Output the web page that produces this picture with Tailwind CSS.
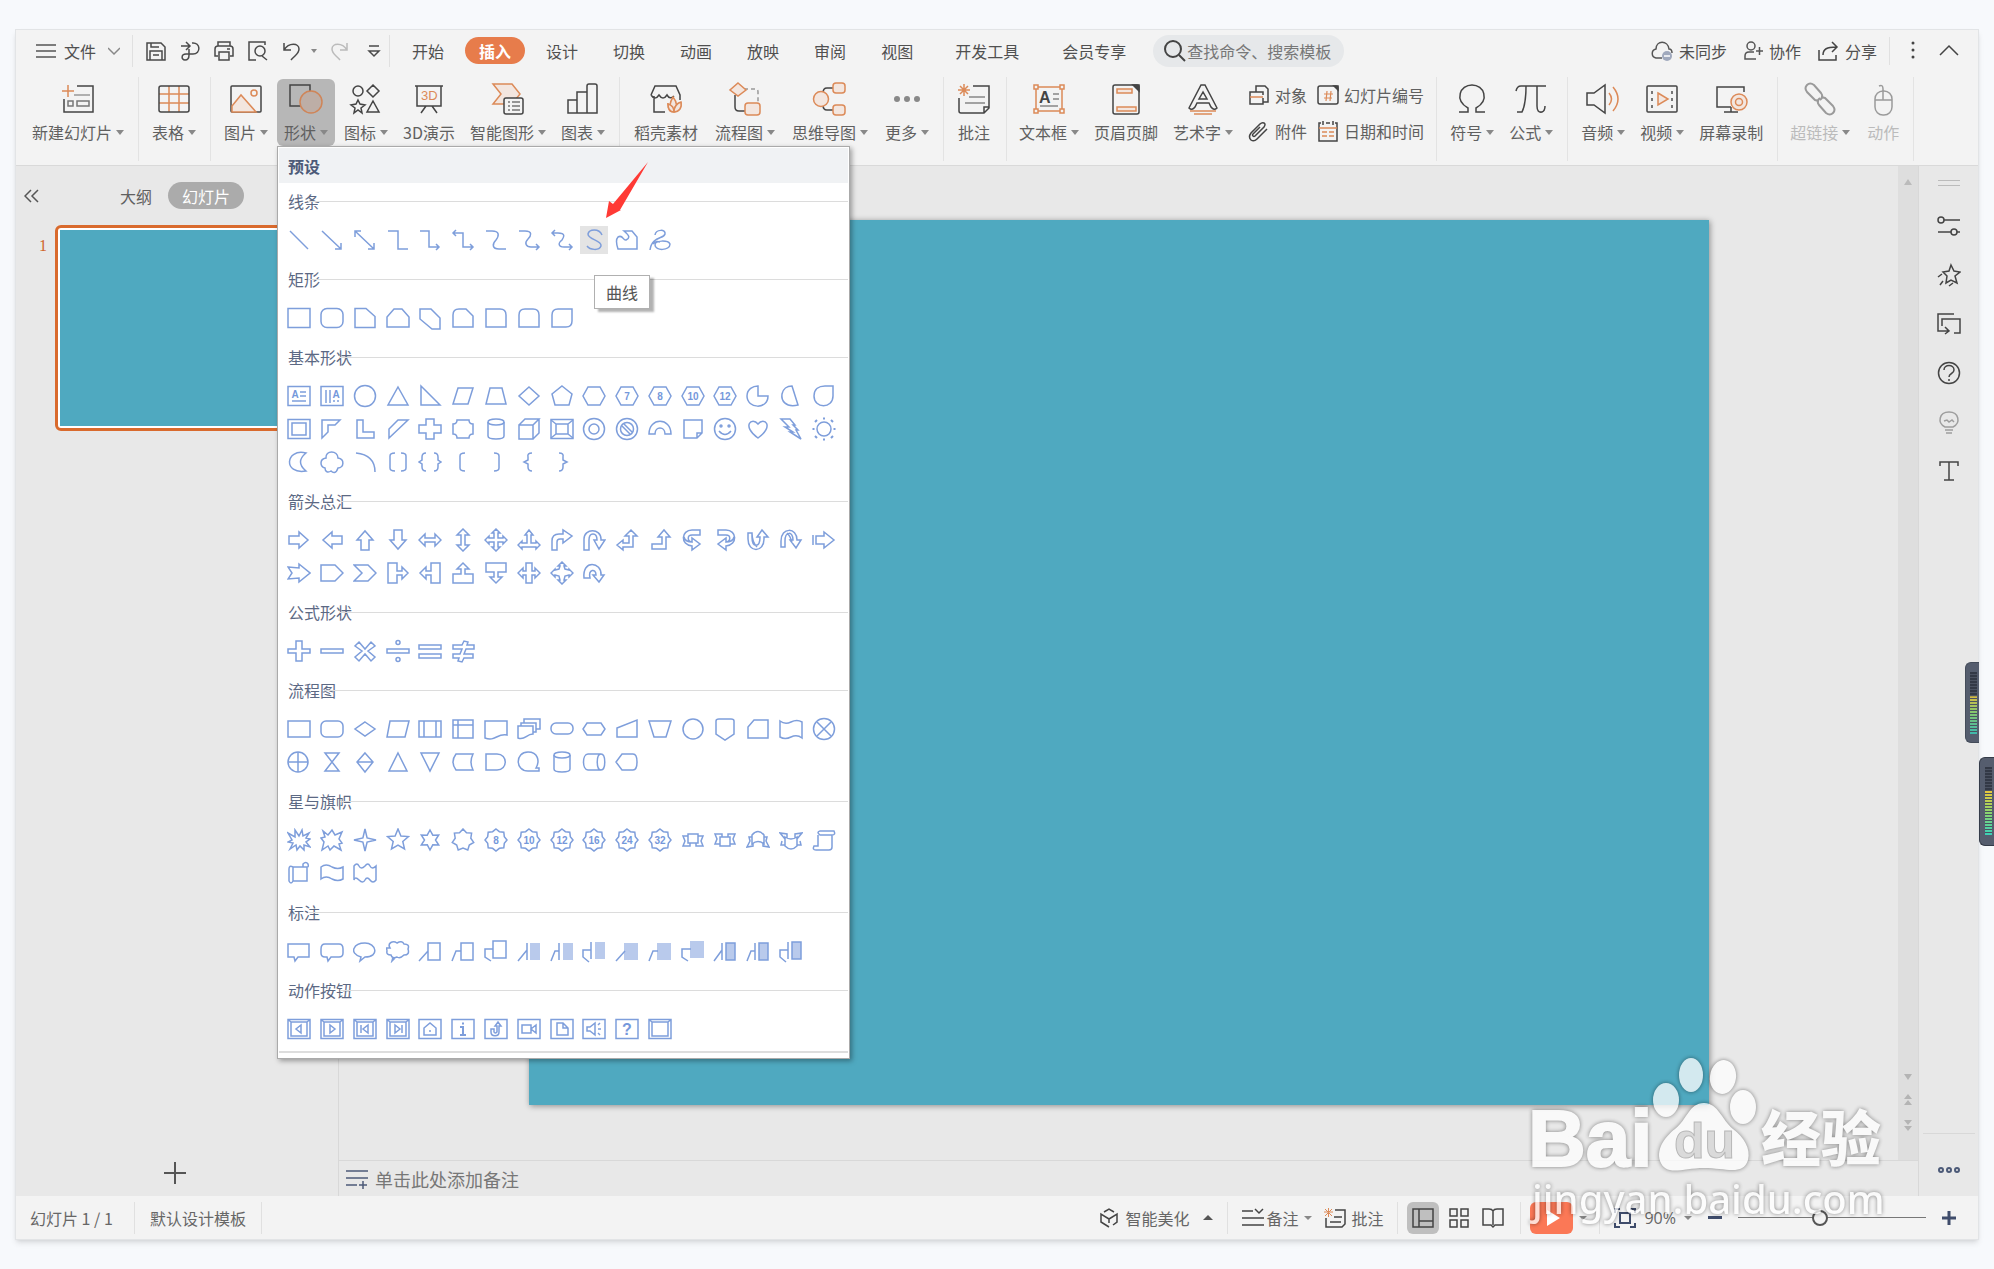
<!DOCTYPE html>
<html lang="zh-CN">
<head>
  <meta charset="UTF-8" />
  <title>演示</title>
  <meta name="viewport" content="width=device-width, initial-scale=1.0" />
  <script src="https://cdn.jsdelivr.net/npm/@tailwindcss/browser@4"></script>
</head>
<body class="h-screen bg-[#f7f9fc] px-[15px] py-[29px] font-['Noto_Sans_CJK_SC',sans-serif] text-base leading-6 text-[#606060] overflow-hidden">
  <div class="flex h-full flex-col border border-[#e2e4e6] bg-[#f3f3f3] shadow-md">

    <!-- Menu bar -->
    <header class="flex h-[43px] shrink-0 items-center pb-[2px] text-[#505050]">
      <button class="ml-5 flex items-center gap-2">
        <svg class="h-5 w-5 fill-none stroke-[#555] stroke-[1.5]" viewBox="0 0 20 20"><path d="M0 4h20M0 10h20M0 16h20"/></svg>
        文件
        <svg class="ml-1 size-3 fill-none stroke-[#888] stroke-[1.5]" viewBox="0 0 12 12"><path d="M0 3l6 6 6-6"/></svg>
      </button>
      <span class="ml-3 h-8 w-px bg-[#e0e0e0]"></span>
      <div class="ml-3 flex items-center gap-3">
        <button aria-label="保存"><svg class="block size-[22px] fill-none stroke-[#4a4a4a] stroke-[1.5]" viewBox="0 0 22 22"><path d="M2 3h14l4 4v13H2zM5 20v-9h12v9M6 3v4h8M8 15h6"/></svg></button>
        <button aria-label="输出"><svg class="block size-[22px] fill-none stroke-[#4a4a4a] stroke-[1.5]" viewBox="0 0 22 22"><path d="M2 6h8M7 2l4 4-4 4M13 3c9-1 9 11 1 11H7c-5 0-5 6-1 6 3 0 4-2 4-5V9"/></svg></button>
        <button aria-label="打印"><svg class="block size-[22px] fill-none stroke-[#4a4a4a] stroke-[1.5]" viewBox="0 0 22 22"><path d="M5 6V2h12v4M5 16H2V9q0-3 3-3h12q3 0 3 3v7h-3M6 12h10v8H6zM14 9h3"/></svg></button>
        <button aria-label="预览"><svg class="block size-[22px] fill-none stroke-[#4a4a4a] stroke-[1.5]" viewBox="0 0 22 22"><path d="M9 20H2V2h16v3M15 16l5 4"/><circle cx="13" cy="11" r="5"/></svg></button>
        <button class="flex items-center gap-2" aria-label="撤销"><svg class="block size-[22px] fill-none stroke-[#4a4a4a] stroke-[1.5]" viewBox="0 0 22 22"><path d="M3 3v7h7M3 10c5-8 15-7 15-1 0 5-4 6-8 11"/></svg><span class="border-x-[3px] border-t-4 border-x-transparent border-t-[#888]"></span></button>
        <button aria-label="恢复"><svg class="block size-[22px] fill-none stroke-[#bbb] stroke-[1.5]" viewBox="0 0 22 22"><path d="M18 3v7h-7M18 10C13 2 3 3 3 9c0 5 4 6 8 11"/></svg></button>
        <button aria-label="自定义"><svg class="block size-[22px] fill-none stroke-[#4a4a4a] stroke-[1.5]" viewBox="0 0 22 22"><path d="M6 6h10M6 11h10l-5 5z"/></svg></button>
      </div>
      <span class="ml-1 h-8 w-px bg-[#e0e0e0]"></span>
      <nav class="ml-2 flex items-center gap-[7px]">
        <button class="px-[14px]">开始</button>
        <button class="h-[27px] rounded-full bg-[#e77c4b] px-[14px] font-bold text-white">插入</button>
        <button class="px-[14px]">设计</button>
        <button class="px-[14px]">切换</button>
        <button class="px-[14px]">动画</button>
        <button class="px-[14px]">放映</button>
        <button class="px-[14px]">审阅</button>
        <button class="px-[14px]">视图</button>
      </nav>
      <nav class="ml-[14px] flex items-center gap-[15px]">
        <button class="px-[14px]">开发工具</button>
        <button class="px-[14px]">会员专享</button>
      </nav>
      <label class="ml-[13px] flex h-8 w-[191px] items-center rounded-full bg-[#e6e8ea] pl-[10px]">
        <svg class="size-6 shrink-0 fill-none stroke-[#444] stroke-2" viewBox="0 0 24 24" aria-hidden="true"><circle cx="10" cy="10" r="8"/><path d="M16 16l6 6"/></svg>
        <input class="w-full bg-transparent placeholder:text-[#777] outline-none" type="text" placeholder="查找命令、搜索模板" aria-label="查找命令" />
      </label>
      <div class="ml-auto flex items-center gap-4">
        <button class="flex items-center gap-[6px]"><svg class="size-[22px] fill-none stroke-[#555] stroke-[1.5]" viewBox="0 0 22 22"><path d="M11 18H5c-5-1-5-8 0-9 0-9 12-9 13 0 2 0 3 2 3 4"/><circle class="fill-[#a0a9bd] stroke-none" cx="16" cy="16" r="5"/><path class="stroke-white" d="M13 16h6"/></svg>未同步</button>
        <button class="flex items-center gap-[6px]"><svg class="size-5 fill-none stroke-[#555] stroke-[1.5]" viewBox="0 0 20 20"><circle cx="8" cy="5" r="4"/><path d="M13 18H2v-3q0-4 4-4h5M13 10h7M16.500 6v8"/></svg>协作</button>
        <button class="flex items-center gap-[6px]"><svg class="size-[22px] fill-none stroke-[#444] stroke-[1.5]" viewBox="0 0 22 22"><path d="M2 10v10h17v-5M6 15C6 9 10 7 19 7M15 2l5 5-5 5"/></svg>分享</button>
      </div>
      <span class="ml-3 h-7 w-px bg-[#e0e0e0]"></span>
      <button class="ml-[21px]" aria-label="更多选项"><svg class="block h-5 w-1 fill-[#444]" viewBox="0 0 4 20"><circle cx="2" cy="2" r="1.500"/><circle cx="2" cy="9" r="1.500"/><circle cx="2" cy="16" r="1.500"/></svg></button>
      <button class="mr-[19px] ml-6" aria-label="收起功能区"><svg class="block h-5 w-5 fill-none stroke-[#444] stroke-[1.5]" viewBox="0 0 20 20"><path d="M1 14l9-9 9 9"/></svg></button>
    </header>

    <!-- Ribbon -->
    <div class="relative z-20 flex h-[93px] shrink-0 border-b border-[#d9d9d9] py-1 whitespace-nowrap [&_button>svg]:fill-none [&_button>svg]:stroke-[#444] [&_button>svg]:stroke-[1.5] [&_i]:ml-1 [&_i]:border-x-4 [&_i]:border-t-[5px] [&_i]:border-x-transparent [&_i]:border-t-[#888] [&_button>span]:flex [&_button>span]:items-center">
      <div class="flex items-start border-r border-[#e3e3e3] pt-1 pr-[14px] pl-4">
        <button class="flex flex-col items-center gap-[3px]"><svg class="size-9" viewBox="0 0 36 36"><path class="stroke-[#dc8a58]" d="M2 10h12M8 4v12"/><path d="M17 5h16v26H4V18"/><path class="stroke-[#999]" d="M14 14h16"/><path class="stroke-[#777]" d="M8 20h5v5H8zM17 20h12v5H17z"/></svg><span>新建幻灯片<i></i></span></button>
      </div>
      <div class="flex items-start border-r border-[#e3e3e3] pt-1 pr-[14px] pl-[13px]">
        <button class="flex flex-col items-center gap-[3px]"><svg class="size-9" viewBox="0 0 36 36"><path class="stroke-[#dc8a58]" d="M3 13h30M3 22h30M13 5v26M23 5v26"/><rect x="3" y="5" width="30" height="26" rx="2"/></svg><span>表格<i></i></span></button>
      </div>
      <div class="flex items-start gap-[15px] border-r border-[#e3e3e3] pt-1 pr-[14px] pl-[13px]">
        <button class="flex flex-col items-center gap-[3px]"><svg class="size-9" viewBox="0 0 36 36"><rect x="3" y="5" width="30" height="26" rx="1"/><path class="fill-[#f3e6df] stroke-[#dc8a58]" d="M4 25l9-11 15 17H4z"/><circle class="stroke-[#dc8a58]" cx="26" cy="12" r="3"/></svg><span>图片<i></i></span></button>
        <div class="relative -mx-[6px] -mt-[2px]">
          <button class="flex h-[67px] w-[58px] flex-col items-center gap-[3px] rounded-md bg-[#b7b7b7] pt-[2px]" aria-expanded="true"><svg class="size-9" viewBox="0 0 36 36"><path d="M14 25H2V4h20v9"/><ellipse class="fill-[#bdaea6] stroke-[#cf8558]" cx="23" cy="21" rx="11" ry="11"/></svg><span>形状<i></i></span></button>

          <!-- Shape gallery -->
          <div class="absolute top-full left-0 w-[573px] border border-[#aaa] bg-white p-px shadow-[2px_2px_5px_rgba(0,0,0,0.35)]">
            <h2 class="mb-[6px] h-[35px] bg-[#f0f2f4] pl-[9px] leading-9 font-bold text-[#4c5a78]">预设</h2>
            <div id="gallery"></div>
            <hr class="mt-[-5px] mb-1 border-t-2 border-[#ddd]" />
            <div class="absolute top-[128px] left-[316px] border border-[#b0b0b0] bg-white px-[11px] py-1 text-[#555] shadow-[4px_3px_2px_rgba(0,0,0,0.3)]" role="tooltip">曲线</div>
            <svg class="absolute top-[14px] left-[325px] h-[58px] w-[46px] fill-[#ff3a35]" viewBox="0 0 46 58" aria-hidden="true"><path d="M45 1L17 49l1 0-15 8L6 40l4 3z"/></svg>
          </div>
        </div>
        <button class="flex flex-col items-center gap-[3px]"><svg class="size-9" viewBox="0 0 36 36"><circle cx="10" cy="10" r="5"/><path d="M25 4l6 6-6 6-6-6zM25 20l6 11H19zM10 19l2 4 5 1-4 3 1 5-4-3-4 3 1-5-4-3 5-1z"/></svg><span>图标<i></i></span></button>
        <button class="flex flex-col items-center gap-[3px]"><svg class="size-9" viewBox="0 0 36 36"><path d="M4 5h28M6 5v20h24V5M15 25l-5 7M21 25l5 7"/><text class="fill-[#dc8a58] stroke-none font-['Liberation_Sans'] text-[13px]" x="10" y="19">3D</text></svg><span>3D演示</span></button>
        <button class="flex flex-col items-center gap-[3px]"><svg class="size-9" viewBox="0 0 36 36"><path class="fill-[#f3e6df] stroke-[#dc8a58]" d="M3 3h19l8 10-8 10H3l8-10z"/><rect class="fill-[#f3f3f3]" x="14" y="17" width="19" height="16" rx="2"/><path class="stroke-[#777]" d="M18 21h2M22 21h8M18 25h2M22 25h8M18 29h2M22 29h8"/></svg><span>智能图形<i></i></span></button>
        <button class="flex flex-col items-center gap-[3px]"><svg class="size-9" viewBox="0 0 36 36"><path d="M3 32V19h9v13zM12 32V11h10v21zM22 32V5q0-2 2-2h6q2 0 2 2v27zM3 32h29"/></svg><span>图表<i></i></span></button>
      </div>
      <div class="flex items-start gap-[17px] border-r border-[#e3e3e3] pt-1 pr-[14px] pl-[14px]">
        <button class="flex flex-col items-center gap-[3px]"><svg class="size-9" viewBox="0 0 36 36"><path d="M17 31H6V15M3 14L7 5h21l4 9v5M3 14q4 6 8 0 4 6 8 0 3 5 7 1"/><path class="fill-[#f3e6df] stroke-[#dc8a58]" d="M26 31C20 26 22 21 25 16c4 5 5 10 1 15zC30 30 34 28 33 22c-4 1-7 4-7 9-1-5-3-7-6-8 0 4 1 8 6 8"/><path class="fill-[#f3e6df] stroke-[#dc8a58]" d="M26 31c5 0 8-4 7-10-4 1-7 5-7 10zM26 31c-4 0-6-3-6-8 4 1 6 4 6 8z"/></svg><span>稻壳素材</span></button>
        <button class="flex flex-col items-center gap-[3px]"><svg class="size-9" viewBox="0 0 36 36"><path d="M8 14v12q0 4 4 4h6"/><path class="stroke-[#999]" stroke-dasharray="4 3" d="M17 8h11q3 0 3 3v12"/><path class="fill-[#f3e6df] stroke-[#dc8a58]" d="M11 2l8 7-8 6-8-6z"/><rect class="fill-[#f3e6df] stroke-[#dc8a58]" x="18" y="22" width="15" height="12" rx="3"/></svg><span>流程图<i></i></span></button>
        <button class="flex flex-col items-center gap-[3px]"><svg class="size-9" viewBox="0 0 36 36"><path d="M22 7h-7q-4 0-4 5M22 29h-7q-4 0-4-5"/><circle class="fill-[#f3e6df] stroke-[#dc8a58]" cx="9" cy="18" r="7.500"/><rect class="fill-[#f3e6df] stroke-[#dc8a58]" x="21" y="2" width="12" height="10" rx="3"/><rect class="fill-[#f3e6df] stroke-[#dc8a58]" x="21" y="24" width="12" height="10" rx="3"/></svg><span>思维导图<i></i></span></button>
        <button class="flex flex-col items-center gap-[3px]"><svg class="size-9" viewBox="0 0 36 36"><g class="fill-[#888] stroke-none"><circle cx="8" cy="18" r="3"/><circle cx="18" cy="18" r="3"/><circle cx="28" cy="18" r="3"/></g></svg><span>更多<i></i></span></button>
      </div>
      <div class="flex items-start border-r border-[#e3e3e3] pt-1 pr-[14px] pl-3">
        <button class="flex flex-col items-center gap-[3px]"><svg class="size-9" viewBox="0 0 36 36"><path class="stroke-[#dc8a58] stroke-[1.5]" d="M2 9h12M8 3v12M4 5l8 8M12 5l-8 8"/><path d="M17 5h16v22l-5 5H5q-2 0-2-2V17M33 26h-5v6"/><path class="stroke-[#888]" d="M13 16h16M9 22h20"/></svg><span>批注</span></button>
      </div>
      <div class="flex items-start gap-[15px] border-r border-[#e3e3e3] pt-1 pr-3 pl-3">
        <button class="flex flex-col items-center gap-[3px]"><svg class="size-9" viewBox="0 0 36 36"><path class="stroke-[#dc8a58]" d="M7 6h22M7 30h22M5 8v20M31 8v20M3 4h4v4H3zM29 4h4v4h-4zM3 28h4v4H3zM29 28h4v4h-4z"/><text class="fill-[#444] stroke-none font-['Liberation_Sans'] text-base font-bold" x="8" y="22">A</text><path class="stroke-[#888]" d="M22 13h6M22 18h6M9 25h18"/></svg><span>文本框<i></i></span></button>
        <button class="flex flex-col items-center gap-[3px]"><svg class="size-9" viewBox="0 0 36 36"><rect x="5" y="4" width="26" height="29" rx="2"/><path class="fill-[#444]" d="M25 4l6 6V4z"/><path class="fill-[#f3e6df] stroke-[#dc8a58]" d="M9 8h15v4H9zM9 26h19v4H9z"/></svg><span>页眉页脚</span></button>
        <button class="flex flex-col items-center gap-[3px]"><svg class="size-9" viewBox="0 0 36 36"><path d="M16 4h4l12 23q-3 3-6-1l-2-4H12l-2 4q-3 4-6 1zM18 11l-4 7h8z"/><path class="stroke-[#dc8a58]" d="M5 30h26M9 33h18"/></svg><span>艺术字<i></i></span></button>
        <div class="mt-[2px] grid grid-cols-[auto_auto] gap-x-[10px] gap-y-3">
          <button class="flex items-center gap-[5px]"><svg class="size-[22px]" viewBox="0 0 22 22"><path d="M8 8V2h9l3 3v13h-5M15 11V8H2v12h13v-6"/><path class="stroke-[#dc8a58]" d="M2 13h13"/></svg>对象</button>
          <button class="flex items-center gap-[5px]"><svg class="size-[22px]" viewBox="0 0 22 22"><rect x="1" y="2" width="20" height="18" rx="2"/><path class="fill-[#444]" d="M17 2l4 4V2z"/><path class="stroke-[#dc8a58] stroke-[1.2]" d="M7 10h9M7 14h8M10 7l-1 10M14 7l-1 10"/></svg>幻灯片编号</button>
          <button class="flex items-center gap-[5px]"><svg class="size-[22px]" viewBox="0 0 22 22"><path d="M7 16l9-9q2-3 0-4-2-1-4 1L3 13q-3 4 0 7 3 2 6-1L19 9M7 16q-1 1-2 0t0-2l7-7"/></svg>附件</button>
          <button class="flex items-center gap-[5px]"><svg class="size-[22px]" viewBox="0 0 22 22"><path d="M4 3H2v18h18V3h-2M9 3h4M6 1v4M16 1v4"/><path class="stroke-[#dc8a58]" d="M2 8h18M5 12h5M12 12h5M5 16h5M12 16h5"/></svg>日期和时间</button>
        </div>
      </div>
      <div class="flex items-start gap-[15px] border-r border-[#e3e3e3] pt-1 pr-[14px] pl-[13px]">
        <button class="flex flex-col items-center gap-[3px]"><svg class="size-9" viewBox="0 0 36 36"><path d="M5 31h9v-4C0 19 6 4 18 4s18 15 4 23v4h9"/></svg><span>符号<i></i></span></button>
        <button class="flex flex-col items-center gap-[3px]"><svg class="size-9" viewBox="0 0 36 36"><path d="M3 10q1-5 5-5h25M13 5c0 12-1 20-4 26H4M24 5v20q0 7 5 6 3-1 3-6"/></svg><span>公式<i></i></span></button>
      </div>
      <div class="flex items-start gap-[15px] border-r border-[#e3e3e3] pt-1 pr-[14px] pl-[13px]">
        <button class="flex flex-col items-center gap-[3px]"><svg class="size-9" viewBox="0 0 36 36"><path d="M2 12h7l11-8v28L9 24H2z"/><path class="stroke-[#dc8a58]" d="M24 12q5 6 0 12M28 6q10 12 0 24"/></svg><span>音频<i></i></span></button>
        <button class="flex flex-col items-center gap-[3px]"><svg class="size-9" viewBox="0 0 36 36"><rect x="3" y="5" width="30" height="26" rx="1"/><path class="fill-[#f3e6df] stroke-[#dc8a58]" d="M14 12l10 6-10 6z"/><path class="stroke-[#777] stroke-2" stroke-dasharray="3 4" d="M8 10v17M28 10v17"/></svg><span>视频<i></i></span></button>
        <button class="flex flex-col items-center gap-[3px]"><svg class="size-9" viewBox="0 0 36 36"><path d="M31 11V6H4v20h14M11 31h14M18 26v5"/><circle class="fill-[#f3e6df] stroke-[#dc8a58]" cx="26" cy="21" r="8"/><circle class="stroke-[#dc8a58]" cx="26" cy="21" r="3.500"/></svg><span>屏幕录制</span></button>
      </div>
      <div class="flex items-start gap-[15px] border-r border-[#e3e3e3] pt-1 pr-3 pl-3 text-[#bbb]">
        <button class="flex flex-col items-center gap-[3px]"><svg class="size-9 opacity-50" viewBox="0 0 36 36"><g stroke-width="2"><path d="M17 20l-4-1L5 11q-3-4 0-7t7 0l7 8q3 4-1 7"/><path d="M19 16l4 1 8 8q3 4 0 7t-7 0l-7-8q-3-4 1-7"/></g></svg><span>超链接<i></i></span></button>
        <button class="flex flex-col items-center gap-[3px]"><svg class="size-9 opacity-50" viewBox="0 0 36 36"><rect x="10" y="10" width="17" height="24" rx="8"/><path d="M10 19h17M18 19V8q0-5-4-3"/></svg><span>动作</span></button>
      </div>
    </div>

    <!-- Work area -->
    <div class="flex min-h-0 flex-1 bg-[#e8e8e8]">
      <aside class="flex w-[323px] shrink-0 flex-col border-r border-[#d8d8d8]">
        <div class="mt-4 flex items-center">
          <button class="ml-2" aria-label="收起"><svg class="block size-4 fill-none stroke-[#555] stroke-[1.5]" viewBox="0 0 16 16"><path d="M7 2L1 8l6 6M14 2L8 8l6 6"/></svg></button>
          <button class="ml-20">大纲</button>
          <button class="ml-4 h-[27px] rounded-full bg-[#ababab] px-[14px] text-white">幻灯片</button>
        </div>
        <div class="mt-4 flex">
          <span class="mt-[9px] w-[39px] pr-2 text-right font-['Liberation_Serif'] text-[#d0642c]">1</span>
          <div class="h-[206px] w-[270px] rounded-md border-[3px] border-[#d96a2d] bg-white p-[2px]"><div class="h-full bg-[#4fa9c0]"></div></div>
        </div>
        <button class="mt-auto mb-3 ml-[148px] size-[22px]" aria-label="新建幻灯片"><svg class="block size-[22px] fill-none stroke-[#555] stroke-2" viewBox="0 0 22 22"><path d="M0 11h22M11 0v22"/></svg></button>
      </aside>

      <main class="flex min-w-0 flex-1 flex-col">
        <div class="flex min-h-0 flex-1">
          <div class="flex min-w-0 flex-1 justify-center pt-[54px] pb-[55px]">
            <div class="aspect-4/3 h-full bg-[#4fa9c0] shadow-[1px_1px_6px_rgba(0,0,0,0.4)]"></div>
          </div>
          <div class="flex w-5 flex-col items-center gap-[14px] bg-[#dedede] pb-7">
            <svg class="mt-[13px] mb-auto h-[6px] w-2 fill-[#bbb]" viewBox="0 0 8 6"><path d="M4 0l4 6H0z"/></svg>
            <svg class="h-[6px] w-2 fill-[#b4b4b4]" viewBox="0 0 8 6"><path d="M0 0h8L4 6z"/></svg>
            <svg class="h-3 w-2 fill-[#b4b4b4]" viewBox="0 0 8 12"><path d="M4 0l4 5H0zM4 6l4 5H0z"/></svg>
            <svg class="h-3 w-2 fill-[#b4b4b4]" viewBox="0 0 8 12"><path d="M0 0h8L4 5zM0 6h8l-4 5z"/></svg>
          </div>
        </div>
        <div class="flex h-9 shrink-0 items-center gap-[7px] border-t border-[#d8d8d8] pl-[7px] text-lg text-[#777]">
          <svg class="size-[22px] fill-none stroke-[#4c5a78] stroke-[1.5]" viewBox="0 0 22 22"><path d="M0 3h22M0 10h22M0 17h11M13 17h8M17 13v8"/></svg>
          单击此处添加备注
        </div>
      </main>

      <aside class="flex w-[60px] shrink-0 flex-col items-center border-l border-[#d8d8d8] pt-[14px] pb-5 [&_svg]:block [&_svg]:fill-none [&_svg]:stroke-[#444] [&_svg]:stroke-[1.5]">
        <div class="h-[6px] w-[22px] border-y border-[#bbb]"></div>
        <div class="mt-7 flex flex-col gap-[25px]">
          <button aria-label="属性"><svg class="size-6" viewBox="0 0 24 24"><circle cx="4" cy="6" r="3"/><circle cx="17" cy="18" r="3"/><path d="M7 6h16M1 18h13M20 18h3"/></svg></button>
          <button aria-label="动画"><svg class="size-6" viewBox="0 0 24 24"><path d="M14 2l3 6 6 1-5 4 2 7-6-3-5 3 1-7-4-4 6-1zM5 11l-4 3M6 18l-3 4M16 20l-4 3"/></svg></button>
          <button aria-label="切换"><svg class="size-6" viewBox="0 0 24 24"><path d="M17 2H1v17h10M8 15l4 4-4 3M5 14V7h18v14h-6"/></svg></button>
          <button aria-label="帮助"><svg class="size-6" viewBox="0 0 24 24"><circle cx="12" cy="12" r="10.500"/><path d="M7 9c0-6 10-6 10 0 0 4-5 3-5 7M12 18v2"/></svg></button>
          <button class="opacity-45" aria-label="提示"><svg class="size-6" viewBox="0 0 24 24"><path d="M8 17C0 13 2 2 12 2s12 11 4 15zM8 20h8M9 23h6M7 11l3-1 2 2 3-2 2 2"/></svg></button>
          <button aria-label="文字"><svg class="size-6" viewBox="0 0 24 24"><path d="M3 7V3h18v4M12 3v18M7 21h10"/></svg></button>
        </div>
        <hr class="mt-auto mb-[30px] w-[52px] border-[#d8d8d8]" />
        <button aria-label="更多"><svg class="h-3 w-6" viewBox="0 0 24 12"><g class="stroke-[#4c5a78] stroke-2"><circle cx="4" cy="6" r="2"/><circle cx="12" cy="6" r="2"/><circle cx="20" cy="6" r="2"/></g></svg></button>
      </aside>
    </div>

    <!-- Status bar -->
    <footer class="flex h-[43px] shrink-0 items-center text-[#666] [&_svg]:block [&_svg]:shrink-0 [&_svg]:fill-none [&_svg]:stroke-[#444] [&_svg]:stroke-[1.5]">
      <span class="w-[118px] pl-[14px]">幻灯片 1 / 1</span>
      <span class="flex h-8 items-center border-x border-[#e0e0e0] px-[15px]">默认设计模板</span>
      <button class="ml-auto flex items-center gap-[6px]"><svg class="size-5" viewBox="0 0 20 20"><path d="M5 4l5-3 5 3M10 19l-8-5V6l8 5 8-5v8l-4 3M10 11v4"/></svg>智能美化<span class="ml-2 border-x-[5px] border-b-[5px] border-x-transparent border-b-[#555]"></span></button>
      <span class="mx-[14px] h-8 w-px bg-[#e0e0e0]"></span>
      <button class="flex items-center gap-[2px]"><svg class="h-5 w-[22px]" viewBox="0 0 22 20"><path d="M0 3h11M0 10h22M0 17h22M13 1l4 4 4-4"/></svg>备注<span class="ml-1 border-x-4 border-t-4 border-x-transparent border-t-[#888]"></span></button>
      <button class="ml-3 flex items-center gap-[5px]"><svg class="size-[22px]" viewBox="0 0 22 22"><path class="stroke-[#dc8a58] stroke-1" d="M0 5h9M4.500 1v9M1 2l7 7M8 2L1 9"/><path d="M11 3h10v14l-3 3H2v-9M6 15h11M10 10h8"/></svg>批注</button>
      <span class="mr-[9px] ml-[14px] h-8 w-px bg-[#e0e0e0]"></span>
      <button class="flex size-8 items-center justify-center rounded-md bg-[#bfbfbf]" aria-label="普通视图"><svg class="size-[22px]" viewBox="0 0 22 22"><path d="M1 2h20v18H1zM7 2v18M7 14h14"/></svg></button>
      <button class="ml-[9px]" aria-label="幻灯片浏览"><svg class="size-[22px]" viewBox="0 0 22 22"><path d="M2 2h7v7H2zM13 2h7v7h-7zM2 13h7v7H2zM13 13h7v7h-7z"/></svg></button>
      <button class="ml-3" aria-label="阅读视图"><svg class="size-[22px]" viewBox="0 0 22 22"><path d="M11 4q-1-2-4-2H1v16h8l2 2 2-2h8V2h-6q-3 0-4 2v14"/></svg></button>
      <span class="mr-[9px] ml-4 h-8 w-px bg-[#e0e0e0]"></span>
      <button class="flex h-8 w-[43px] items-center justify-center rounded-md bg-[#fb7856]" aria-label="放映"><span class="ml-1 border-y-8 border-l-[13px] border-y-transparent border-l-white"></span></button>
      <span class="ml-[6px] border-x-4 border-t-4 border-x-transparent border-t-[#888]"></span>
      <span class="mr-[14px] ml-3 h-8 w-px bg-[#e0e0e0]"></span>
      <button aria-label="适应窗口"><svg class="size-[22px]" viewBox="0 0 22 22"><g class="stroke-[#3f4c6b] stroke-2"><path d="M1 6V2h5M16 2h5v4M21 16v4h-5M6 20H1v-4M6 6h10v10H6z"/></g></svg></button>
      <button class="ml-2 flex items-center font-['Open_Sans']">90%<span class="ml-2 border-x-4 border-t-4 border-x-transparent border-t-[#888]"></span></button>
      <button class="ml-4 h-[3px] w-[14px] bg-[#3f4c6b]" aria-label="缩小"></button>
      <input class="mx-4 h-4 w-[188px] appearance-none bg-[linear-gradient(#777,#777)] bg-[length:100%_1px] bg-center bg-no-repeat [&::-webkit-slider-thumb]:size-4 [&::-webkit-slider-thumb]:appearance-none [&::-webkit-slider-thumb]:rounded-full [&::-webkit-slider-thumb]:border-2 [&::-webkit-slider-thumb]:border-[#555] [&::-webkit-slider-thumb]:bg-[#f3f3f3]" type="range" min="0" max="100" value="43" aria-label="缩放" />
      <button class="mr-[22px]" aria-label="放大"><svg class="size-[14px]" viewBox="0 0 14 14"><path class="stroke-[#3f4c6b] stroke-3" d="M0 7h14M7 0v14"/></svg></button>
    </footer>
  </div>

  <!-- Level meters docked at the screen edge -->
  <div class="absolute top-[662px] right-[15px] h-[81px] w-[14px] rounded-l-md border border-r-0 border-[#444c5a] bg-[#555d6e] pt-[9px] pl-1"><div class="h-[62px] w-[7px] bg-[repeating-linear-gradient(transparent_0_2px,#4b5261_2px_3px),linear-gradient(#333946_38%,#d6bd46_40%,#84c56e_65%,#3fb8ad)]"></div></div>
  <div class="absolute top-[757px] right-0 h-[89px] w-[15px] rounded-l-md border border-r-0 border-[#343b48] bg-[#555d6e] pt-[9px] pl-[5px]"><div class="h-[68px] w-[7px] bg-[repeating-linear-gradient(transparent_0_2px,#4b5261_2px_3px),linear-gradient(#333946_34%,#e8c83c_36%,#8fd46a_65%,#3bd0b8)]"></div></div>

  <!-- Watermark -->
  <svg class="absolute right-[104px] bottom-[37px] z-30 h-[180px] w-[365px] fill-white opacity-75 drop-shadow-[0_0_2px_rgba(0,0,0,0.6)]" viewBox="0 0 365 180">
    <text class="font-['Liberation_Sans'] text-[80px] font-bold stroke-white stroke-2" x="3" y="114">Bai</text>
    <ellipse cx="141" cy="48" rx="13" ry="17"/><ellipse cx="166" cy="23" rx="12" ry="17"/><ellipse cx="198" cy="25" rx="13" ry="17" transform="rotate(8 198 25)"/><ellipse cx="218" cy="55" rx="13" ry="17"/>
    <path d="M179 51c14 0 18 17 29 26 11 8 18 20 15 31-5 16-22 8-44 8s-38 9-44-7c-4-13 6-25 15-32 12-9 14-26 29-26z"/>
    <text class="fill-[#d6d6d6] stroke-[#a8a8a8] stroke-1 font-['Liberation_Sans'] text-[50px] font-bold" x="149" y="106">du</text>
    <text class="text-[60px] font-black" x="236" y="109">经验</text>
    <text class="font-['Noto_Sans'] text-[40px] font-medium" x="7" y="162">jingyan.baidu.com</text>
  </svg>

  <script>
    const p = (d) => `<path d="${d}"/>`;
    const f = (d) => `<path class="fill-[#b9caec] stroke-none" d="${d}"/>`;
    const e = (x, y, rx, ry = rx) => `<ellipse cx="${x}" cy="${y}" rx="${rx}" ry="${ry}"/>`;
    const rot = (a, s) => `<g transform="rotate(${a} 12 12)">${s}</g>`;
    const flip = (s) => `<g transform="matrix(-1 0 0 1 24 0)">${s}</g>`;
    const txt = (s, x = 12, y = 16) => `<text class="fill-[#7598db] stroke-none font-['Liberation_Sans'] text-[10px] font-bold" text-anchor="middle" x="${x}" y="${y}">${s}</text>`;
    const star = (n, r1, r2) => {
      const pts = [];
      for (let i = 0; i < n * 2; i++) {
        const r = i % 2 ? r2 : r1;
        const a = Math.PI * i / n - Math.PI / 2;
        pts.push((12 + r * Math.cos(a)).toFixed(1) + " " + (12 + r * Math.sin(a)).toFixed(1));
      }
      return p("M" + pts.join("L") + "z");
    };

    const hex = p("M6 3h12l5 9-5 9H6l-5-9z");
    const right = p("M2 8h10V4l9 8-9 8v-4H2z");
    const dbl = p("M1 12l6-6v4h10V6l6 6-6 6v-4H7v4z");
    const bent = p("M2 22v-9q0-7 7-7h4V2l9 6-9 7v-4h-3q-3 0-3 3v8z");
    const uturn = p("M2 22V11C2 0 19 0 19 11v1h4l-6 9-5-9h3c0-8-8-8-8 0v10z");
    const elbow = p("M4 16h10V9h-4l6-7 6 7h-4v12H4z");
    const curl = p("M19 2h-8C0 2-1 17 11 18v4l8-6-8-6v4c-5-1-5-7 0-7h8zM3 9c1 4 4 5 8 5");
    const swoop = p("M2 5v6c0 14 16 14 16 0V9h4l-6-7-5 7h3c0 11-8 11-8 0V5zM6 5q0 9 5 14");
    const frame = p("M1 2.500h22v19H1z");
    const bevel = p("M1 2.500h22v19H1zM4 5h16v14H4zM1 2.500L4 5M23 2.500L20 5");
    const ribbon = p("M7 6h10v9H7zM7 8H2l2 5-2 5h7v-3M17 8h5l-2 5 2 5h-7v-3");
    const block = p("M2 2h9v8h5V6l6 6-6 6v-4h-5v8H2z");
    const seal = star(8, 11, 9);

    const sections = [
      ["线条", [
        p("M3 3l18 18"), p("M2 3l19 18M21 15v6h-6"), p("M2 3l19 18M21 15v6h-6M2 9V3h6"),
        p("M2 3h10v18h10"), p("M2 3h9v16h10M18 16l3 3-3 3"), p("M2 5h10v14h10M5 2L2 5l3 3M19 16l3 3-3 3"),
        p("M2 3h6c8 0 7 5 4 9-4 4-4 9 3 9h7"), p("M2 3h6c8 0 6 5 3 8-4 4-2 8 3 8h8M19 16l3 3-3 3"),
        p("M2 5h6c8 0 6 4 4 7-4 3-4 7 2 7h8M5 2L2 5l3 3M19 16l3 3-3 3"),
        p("M20 7C17 0 7 1 6 6c0 6 14 6 13 12-2 5-11 4-14 0"),
        p("M9 3h8l5 6v12H3C2 18 0 12 3 9c5-3 5 4 8 3 4-2 4-4-2-9z"),
        p("M7 7C8 1 18 1 17 6 16 11 4 8 2 22M7 17C7 12 20 12 22 16c0 7-15 7-15 1zM5 16c2-3 4-3 7-2")]],
      ["矩形", [
        frame, '<rect x="1" y="2.500" width="22" height="19" rx="6"/>',
        p("M2 2.500h11l9 8v11H2z"), p("M1 21V11l7-8h8l7 8v10z"), p("M2 3h11l9 9v11h-8L2 13z"),
        p("M2 21V9q0-6 6-6h7l7 7v11z"), p("M2 3h14q6 0 6 6v12H2z"), p("M2 21V9q0-6 6-6h8q6 0 6 6v12z"),
        p("M2 21V9q0-6 6-6h14v12q0 6-6 6z")]],
      ["基本形状", [
        frame + txt("A", 8, 14) + p("M13 8h6M13 12h6M5 17h14"),
        frame + txt("A", 16, 14) + p("M6 6v13M10 6v13M14 16v2M18 16v2"),
        e(12, 12, 10.5), p("M12 3l10 18H2z"), p("M3 2l19 19H3z"), p("M7 4h15l-5 16H2z"), p("M6 4h12l4 16H2z"),
        p("M12 3l10 9-10 9L2 12z"), p("M12 2l10 8-3 11H5L2 10z"), hex, hex + txt(7), hex + txt(8), hex + txt(10), hex + txt(12),
        p("M12 2v10h10C22 26 1 25 1 12 1 5 7 2 12 2z"), p("M13 2l6 19C6 24 2 16 3 10c1-5 5-8 10-8z"), p("M21 2v10c0 13-19 13-19 0C2 5 7 2 13 2z"),
        frame + p("M5 6h14v12H5z"), p("M2 3h18l-5 5H8v7l-6 6z"), p("M4 3h6v12h11v6H4z"), p("M12 3h10L3 21v-9z"),
        p("M8 2h8v6h7v8h-7v6H8v-6H1V8h7z"), p("M6 3h12q0 4 4 4v10q-4 0-4 4H6q0-4-4-4V7q4 0 4-4z"),
        e(12, 5, 8, 3) + p("M4 5v14c0 4 16 4 16 0V5"), p("M2 8h14v14H2zM2 8l6-6h14l-6 6M22 2v14l-6 6"),
        frame + p("M6 7h12v10H6zM1 3l5 4M23 3l-5 4M1 21l5-4M23 21l-5-4"), e(12, 12, 10.5) + e(12, 12, 5),
        e(12, 12, 10.5) + e(12, 12, 6.5) + p("M7 9l8 8M9 7l8 8"), p("M1 17C1 0 23 0 23 17h-6c0-8-10-8-10 0z"),
        p("M3 3h18v13l-5 5H3zM21 16h-5v5"), e(12, 12, 10.5) + e(8, 9, 1) + e(16, 9, 1) + p("M6 14q6 7 12 0"),
        p("M12 21C-5 9 6-1 12 7c6-8 17 2 0 14z"), p("M2 2h9l5 6h-2l5 5h-2l5 9-11-7h3l-8-5h4z"),
        e(12, 12, 7) + `<g stroke-width="2">${p("M11 1.500h2M11 22.500h2M1.500 11v2M22.500 11v2M3 5l2-2M19 3l2 2M3 19l2 2M19 21l2-2")}</g>`,
        p("M19 3C-2-2-4 25 19 21q-11-9 0-18z"), p("M6 8C5 0 18 0 18 8c7 1 6 10 0 10-2 6-5 5-7 3-3 2-6 1-6-3-5-1-6-9 1-10z"),
        p("M3 3q19 2 19 19"), p("M9 3q-5 0-5 3v12q0 3 5 3M15 3q5 0 5 3v12q0 3-5 3"), p("M8 3Q4 3 4 7v3l-3 2 3 2v3q0 4 4 4M16 3q4 0 4 4v3l3 2-3 2v3q0 4-4 4"),
        p("M14 3q-5 0-5 3v12q0 3 5 3"), p("M10 3q5 0 5 3v12q0 3-5 3"), p("M15 3q-5 0-4 4v3l-4 2 4 2v3q0 4 4 4"), p("M9 3q5 0 4 4v3l4 2-4 2v3q0 4-4 4")]],
      ["箭头总汇", [
        right, flip(right), rot(-90, right), rot(90, right), dbl, rot(90, dbl),
        p("M12 1l4 4h-2v5h5V8l4 4-4 4v-2h-5v5h2l-4 4-4-4h2v-5H5v2l-4-4 4-4v2h5V5H8z"),
        p("M12 2l4 5h-2v8h5v-2l4 4-4 4v-2H5v2l-4-4 4-4v2h5V7H8z"), bent, uturn,
        p("M2 17l6-5v3h6V8h-4l6-6 6 6h-4v11H8v3z"), elbow, curl, flip(curl), swoop,
        p("M2 19v-6c0-14 16-14 16-1h4l-5 8-6-8h3C14 3 6 3 6 13v6zM8 5q4 4 5 10"),
        p("M1 7v10M4 8h8V4l10 8-10 8v-4H4z"),
        p("M1 6l11 1V3l11 9-11 9v-4L1 18l4-6z"), p("M1 4h14l8 8-8 8H1z"), p("M1 4h14l8 8-8 8H1l8-8z"),
        block, flip(block), rot(-90, block), rot(90, block),
        p("M9 2h6v8h3V7l5 5-5 5v-3h-3v8H9v-8H6v3l-5-5 5-5v3h3z"), p("M12 1l4 4h-2l1 3 4 1V8l4 4-4 4v-2l-4 1-1 4h2l-4 4-4-4h2l-1-4-4-1v2l-4-4 4-4v1l4-1 1-3H8z"),
        p("M2 17C0-2 20 1 19 14h3l-5 7-6-7h3C14 7 6 8 8 17z")]],
      ["公式形状", [
        p("M9 2h6v8h8v4h-8v8H9v-8H1v-4h8z"), p("M1 10h22v4H1z"), p("M6 3l6 7 6-7 4 4-7 5 7 6-4 4-6-7-6 7-4-4 7-6-7-5z"),
        e(12, 3.500, 2) + p("M1 10h22v4H1z") + e(12, 20.500, 2), p("M1 6h22v4H1zM1 15h22v4H1z"),
        p("M2 6h9l2-4 4 1-1 3h7v4h-8l-2 5h9v4h-9l-2 4-4-1 1-3H2v-4h7l2-5H2z")]],
      ["流程图", [
        p("M1 4h22v16H1z"), '<rect x="1" y="4" width="22" height="16" rx="5"/>', p("M12 5l10 7-10 7-10-7z"), p("M4 4h19l-4 16H1z"),
        p("M1 4h22v16H1zM6 4v16M18 4v16"), p("M2 3h20v18H2zM7 3v18M2 8h20"), p("M1 4h22v14c-10-2-12 7-22 3z"),
        p("M1 9h15v8c-7 0-8 7-15 4zM4 9V6h15v9h-3M7 6V2h16v10h-4"), '<rect x="1" y="6" width="22" height="11" rx="5"/>', p("M5 6h14l4 6-4 6H5l-4-6z"),
        p("M2 11l20-8v17H2z"), p("M1 4h22l-5 16H6z"), e(12, 12, 10), p("M3 4q0-2 3-2h12q3 0 3 2v13l-9 6-9-6z"), p("M8 3h14v18H2V10z"),
        p("M1 4q5 4 11 1 6-3 11 0v16q-5-4-11-1-6 3-11 0z"), e(12, 12, 10.500) + p("M5 5l14 14M19 5L5 19"),
        e(11, 12, 10) + p("M1 12h20M11 2v20"), p("M5 3h14L5 21h14z"), p("M12 3l8 9-8 10-8-10zM4 12h16"), p("M12 3l9 18H3z"), p("M3 3h18l-9 18z"),
        p("M5 4h17q-4 8 0 16H5q-6-8 0-16z"), p("M2 4h11c11 0 11 16 0 16H2z"), p("M22 21H11C-2 21-2 2 11 2c10 0 12 9 8 16h3z"),
        e(12, 5, 8, 3) + p("M4 5v14c0 4 16 4 16 0V5"), p("M6 4h13c5 0 5 16 0 16H6C0 20 0 4 6 4zM19 4c-5 0-5 16 0 16"), p("M7 4h11q4 0 4 8t-4 8H7l-6-8z")]],
      ["星与旗帜", [
        p("M12 8l3-6 1 6 6-3-3 5 4 1-4 3 4 5-6-2v5l-4-4-3 4-1-5-6 4 3-6-5-1 4-2-4-7 7 4V2z"), p("M8 7l4-5 3 5 7-3-3 7 3 4-3 1 2 6-7-4-4 4-2-4-6 4 2-8-3-4 4-1-2-6z"),
        star(4, 11, 3), star(5, 11, 5), star(6, 10, 5.500), star(7, 11, 8), seal + txt(8), seal + txt(10), seal + txt(12), seal + txt(16), seal + txt(24), seal + txt(32),
        ribbon, `<g transform="matrix(1 0 0 -1 0 24)">${ribbon}</g>`, p("M6 7q6-7 12 0v9q-6-5-12 0zM6 9H3l1 4-3 6 6-1v-3M18 9h3l-1 4 3 6-6-1v-3"), p("M6 9q6 4 12 0v9q-6 6-12 0zM6 11L1 5l7 1v4M18 11l5-6-7 1v4M6 17H2l1-4M18 17h4l-1-4"),
        p("M8 3h14q2 4-2 4H8q-4-3 0-4zM6 7v11H2q-2 4 2 4h13q3 0 3-3V7"),
        p("M6 6h14v14H6zM6 6Q2 4 2 8v12q2 4 4 0zM16 6V3q3-3 5 0 1 3-1 3"), p("M1 6q5-4 11 0 6 3 11 0v12q-5 3-11 0-6-4-11 0z"), p("M1 5q3-4 5 0t6 0q3-4 5 0t6 0v14q-3 4-6 0t-5 0-6 0-5 0z")]],
      ["标注", [
        p("M1 5h21v13H11l-3 4-1-4H1z"), p("M5 5h14q4 0 4 5v4q0 4-4 4h-8l-3 4-1-4H5q-4 0-4-4v-4q0-5 4-5z"), p("M8 18C-5 14 1 4 12 4s15 14 0 14l-5 4z"),
        p("M4 9C1 4 7 1 11 4q5-3 7 1 6 0 4 5 2 6-4 6-4 4-7 2-5 2-6-2-5 0-4-4 0-2 -1-3zM7 18l-1 4 3-3"),
        p("M10 4h12v17H10zM1 22l9-10"), p("M10 4h12v17H10zM1 22l4-10h5"), p("M9 2h13v17H9zM9 10H1v8l6 4"),
        f("M13 4h10v17H13z") + p("M10 4v17M1 22l9-11"), f("M13 4h10v17H13z") + p("M9 4v17M1 22l4-10h4"), f("M13 3h10v17H13z") + p("M9 3v17M9 11H1v7l6 5"),
        f("M9 4h14v17H9z") + p("M1 22l9-10"), f("M9 4h14v17H9z") + p("M1 22l4-10h5"), f("M9 2h14v17H9z") + p("M10 10H1v8l6 4"),
        f("M13 4h9v17h-9z") + p("M13 4h9v17h-9zM9 4v17M1 22l8-11"), f("M13 4h9v17h-9z") + p("M13 4h9v17h-9zM9 4v17M1 22l4-10h4"), f("M13 3h9v17h-9z") + p("M13 3h9v17h-9zM9 3v17M9 11H1v7l6 5")]],
      ["动作按钮", [
        bevel + p("M14 8v8l-5-4z"), bevel + p("M10 8v8l5-4z"), bevel + p("M15 8v8l-5-4zM8 8v8"), bevel + p("M9 8v8l5-4zM16 8v8"),
        frame + p("M6 11l6-5 6 5v7H6zM12 13v2"), frame + `<g stroke-width="2">${p("M9 10h3v8M9 18h6M11 6.500h2")}</g>`, frame + p("M7 12v3c0 5 8 5 8 0V9h2l-3-4-3 4h2v6q-2 2-3 0v-3z"),
        frame + p("M5 8h9v8H5zM14 12l5-4v8z"), frame + p("M7 6h6l5 5v7H7zM13 6v5h5"), frame + p("M5 10h3l5-4v12l-5-4H5zM16 8l2-2M16 12h3M16 16l2 2"),
        frame + `<text class="fill-[#7598db] stroke-none font-['Liberation_Sans'] text-base font-bold" text-anchor="middle" x="12" y="18">?</text>`, bevel]]
    ];

    document.getElementById("gallery").innerHTML = sections.map(([title, shapes]) => `
      <section class="mb-[11px]">
        <h3 class="flex h-6 items-center pl-[9px] text-[#5c6984]">${title}<span class="-ml-3 h-px flex-1 bg-[#dcdcdc]"></span></h3>
        <div class="mt-[10px] mr-2 ml-1 grid auto-rows-[33px] grid-cols-17 place-items-center">
          ${shapes.map((s, i) => `<button class="${title === "线条" && i === 9 ? "bg-[#e4e4e4] p-[2px]" : "p-[2px]"}" aria-label="${title} ${i + 1}"><svg class="block h-6 w-6 fill-none stroke-[#7e9edb]! stroke-[1.5]" viewBox="0 0 24 24">${s}</svg></button>`).join("")}
        </div>
      </section>`).join("");
  </script>
</body>
</html>
